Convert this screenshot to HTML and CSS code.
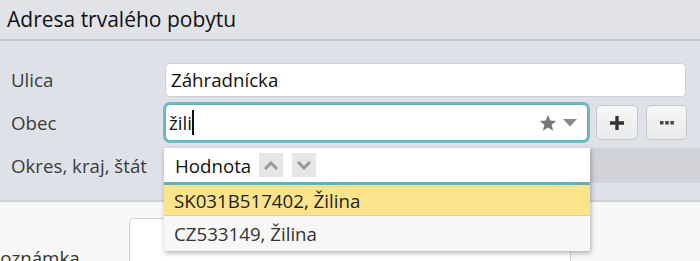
FILE: index.html
```html
<!DOCTYPE html>
<html lang="sk">
<head>
    <meta charset="UTF-8">
    <title>Adresa trvalého pobytu</title>
    <link rel="stylesheet" href="styles.css">
</head>
<body>

    <div class="panel-header">Adresa trvalého pobytu</div>

    <div class="form">
        <div class="row">
            <label class="label">Ulica</label>
            <input class="field" type="text" value="Záhradnícka">
        </div>

        <div class="row">
            <label class="label">Obec</label>
            <div class="combo">
                <span class="combo-text">žili</span><span class="caret"></span>
                <span class="combo-icons">
                    <svg width="18" height="16" viewBox="0 0 24 22">
                        <path d="M12 0l3.1 7.6 8.2.6-6.3 5.3 2 8-7-4.4-7 4.4 2-8L.7 8.2l8.2-.6z" fill="#777"/>
                    </svg>
                    <svg width="14" height="8" viewBox="0 0 14 8">
                        <path d="M0 0h14L7 7.5z" fill="#888"/>
                    </svg>
                </span>
            </div>
            <button class="btn">
                <svg width="14" height="14" viewBox="0 0 14 14">
                    <path d="M5.3 0h3.4v5.3H14v3.4H8.7V14H5.3V8.7H0V5.3h5.3z" fill="#333"/>
                </svg>
            </button>
            <button class="btn">
                <svg width="14" height="4" viewBox="0 0 14 4">
                    <rect x="0" y="0" width="3.5" height="3.5" fill="#444"/>
                    <rect x="5.2" y="0" width="3.5" height="3.5" fill="#444"/>
                    <rect x="10.4" y="0" width="3.5" height="3.5" fill="#444"/>
                </svg>
            </button>
        </div>

        <div class="row">
            <label class="label">Okres, kraj, štát</label>
            <div class="field field-disabled"></div>
        </div>
    </div>

    <div class="notes">
        <label class="notes-label">Poznámka</label>
        <div class="notes-area"></div>
    </div>

    <!-- Autocomplete list for Obec -->
    <div class="dropdown">
        <div class="dropdown-head">
            <span class="dropdown-title">Hodnota</span>
            <span class="sort-btn">
                <svg width="14" height="9" viewBox="0 0 14 9"><path d="M1 8l6-6 6 6" stroke="#999" stroke-width="3" fill="none"/></svg>
            </span>
            <span class="sort-btn">
                <svg width="14" height="9" viewBox="0 0 14 9"><path d="M1 1l6 6 6-6" stroke="#999" stroke-width="3" fill="none"/></svg>
            </span>
        </div>
        <div class="dropdown-item active">SK031B517402, Žilina</div>
        <div class="dropdown-item">CZ533149, Žilina</div>
    </div>

</body>
</html>
```

FILE: styles.css
```css
body {
    margin: 0;
    padding: 0;
    font-family: 'Open Sans', 'Liberation Sans', sans-serif;
    font-size: 18.7px;
    background-color: #f8f8f9;
    color: #222;
    height: 261px;
    overflow: hidden;
}

.panel-header {
    height: 39px;
    line-height: 38px;
    padding-left: 7px;
    background-color: #e1e3e9;
    border-bottom: 2px solid #c6c8cd;
    color: #111;
    font-size: 21px;
}

.form {
    padding: 17px 0 13px 0;
    background-color: #dfe1e8;
    border-bottom: 2px solid #cfd1d6;
}

.row {
    display: flex;
    align-items: center;
    height: 43px;
}

.label {
    width: 165px;
    padding-left: 11px;
    box-sizing: border-box;
    color: #3c3c3c;
    flex-shrink: 0;
}

.field {
    width: 521px;
    height: 34px;
    padding: 0 5px;
    box-sizing: border-box;
    border: 1px solid #ccced3;
    border-radius: 5px;
    background-color: #fff;
    font-family: inherit;
    font-size: 18.7px;
    color: #111;
    outline: none;
}

.field-disabled {
    width: 535px;
    height: 35px;
    border: none;
    border-radius: 0;
    background-color: #d1d3d9;
}

.combo {
    display: flex;
    align-items: center;
    width: 423px;
    height: 37px;
    padding: 0 10px 0 3px;
    box-sizing: border-box;
    border: 1px solid #5bb4ba;
    border-radius: 5px;
    box-shadow: 0 0 0 2px #6dbcc1;
    background-color: #fff;
    color: #111;
}

.caret {
    width: 2px;
    height: 25px;
    background-color: #111;
}

.combo-icons {
    display: flex;
    align-items: center;
    gap: 6px;
    margin-left: auto;
}

.btn {
    display: flex;
    align-items: center;
    justify-content: center;
    width: 42px;
    height: 35px;
    margin-left: 8px;
    padding: 0;
    border: 1px solid #c4c6cb;
    border-radius: 5px;
    background: linear-gradient(#f7f7f7, #e9e9eb);
    cursor: pointer;
}

.btn + .btn {
    width: 41px;
}

.notes {
    display: flex;
    padding-top: 16px;
    height: 43px;
    overflow: hidden;
}

.notes-label {
    width: 140px;
    margin-left: -11px;
    padding-top: 27px;
    color: #333;
    flex-shrink: 0;
}

.notes-area {
    width: 440px;
    height: 60px;
    border: 1px solid #cfd0d3;
    border-radius: 5px;
    background-color: #fff;
}

/* Autocomplete popup */
.dropdown {
    position: absolute;
    top: 148px;
    left: 164px;
    width: 426px;
    background-color: #fff;
    box-shadow: 1px 2px 5px rgba(0, 0, 0, 0.3);
}

.dropdown-head {
    display: flex;
    align-items: center;
    height: 34px;
    padding-left: 11px;
    border-bottom: 3px solid #5bb4ba;
}

.dropdown-title {
    font-weight: 500;
    color: #111;
    margin-right: 8px;
}

.sort-btn {
    display: flex;
    align-items: center;
    justify-content: center;
    width: 24px;
    height: 24px;
    margin-right: 9px;
    background-color: #e6e6e8;
}

.dropdown-item {
    height: 31px;
    line-height: 31px;
    padding-left: 10px;
    background-color: #f7f7f7;
    color: #333;
}

.dropdown-item.active {
    height: 30px;
    background-color: #fde38b;
    border-bottom: 1px solid #e9cf77;
    color: #222;
}

.dropdown-item + .dropdown-item {
    height: 35px;
    line-height: 35px;
}
```
